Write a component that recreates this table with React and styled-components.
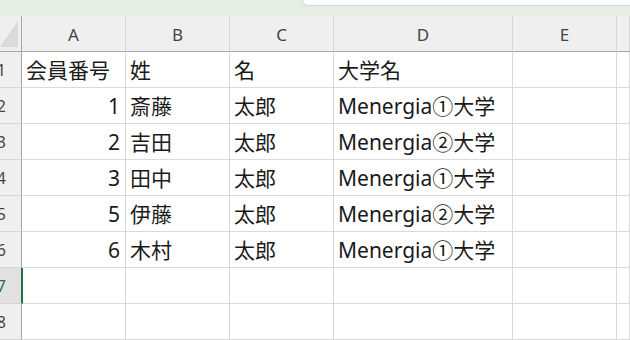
import React from "react";
import styled, { createGlobalStyle } from "styled-components";

const Global = createGlobalStyle`
  html, body { margin: 0; padding: 0; background: #ffffff; overflow: hidden; }
  body { font-family: "Noto Sans CJK JP", "Noto Sans", sans-serif; }
`;

const Page = styled.div`
  width: 630px;
  height: 340px;
  display: flex;
  flex-direction: column;
  overflow: hidden;
  background: #fff;
`;

const TopStrip = styled.div`
  height: 16px;
  flex: none;
  background: #e6ede3;
  display: flex;
  justify-content: flex-end;
  align-items: flex-start;
`;

const FormulaBox = styled.div`
  width: 327px;
  height: 5px;
  background: #ffffff;
  border: 1px solid #d2d9cf;
  border-top: none;
  border-right: none;
  border-bottom-left-radius: 7px;
`;

const Grid = styled.div`
  display: grid;
  grid-template-columns: 22px 104px 104px 104px 179px 104px 1fr;
  grid-auto-rows: 36px;
`;

const Corner = styled.div`
  background: #efefef;
  border-right: 1px solid #a8a8a8;
  border-bottom: 1px solid #a8a8a8;
  position: relative;
  svg { position: absolute; left: 0; top: 0; }
`;

const ColHead = styled.div`
  background: #efefef;
  border-right: 1px solid #d5d5d5;
  border-bottom: 1px solid #a8a8a8;
  display: flex;
  align-items: center;
  justify-content: center;
  font-family: "Noto Sans", "Liberation Sans", sans-serif;
  font-size: 17px;
  color: #444444;
  padding-top: 1px;
  box-sizing: border-box;
`;

const RowHead = styled.div`
  background: ${(p) => (p.$active ? "#e1e1e1" : "#efefef")};
  border-right: ${(p) => (p.$active ? "2px solid #1e7145" : "1px solid #a8a8a8")};
  border-bottom: 1px solid #d5d5d5;
  margin-right: ${(p) => (p.$active ? "-1px" : "0")};
  overflow: hidden;
  display: flex;
  justify-content: flex-end;
  align-items: center;
  font-family: "Noto Sans", "Liberation Sans", sans-serif;
  font-size: 16px;
  color: ${(p) => (p.$active ? "#1e7145" : "#444444")};
  position: relative;
  z-index: 1;
`;

const RowNum = styled.span`
  flex: none;
  margin-right: 15px;
`;

const Cell = styled.div`
  border-right: 1px solid #dadada;
  border-bottom: 1px solid #dadada;
  display: flex;
  align-items: flex-end;
  justify-content: ${(p) => (p.$num ? "flex-end" : "flex-start")};
  padding: 0 5px 3px 4px;
  box-sizing: border-box;
  font-family: "Noto Sans", "Noto Sans CJK JP", sans-serif;
  font-size: 21px;
  line-height: 28px;
  color: #1a1a1a;
  white-space: nowrap;
  overflow: hidden;
`;

const cols = ["A", "B", "C", "D", "E", ""];

const data = [
  ["会員番号", "姓", "名", "大学名"],
  [1, "斎藤", "太郎", "Menergia①大学"],
  [2, "吉田", "太郎", "Menergia②大学"],
  [3, "田中", "太郎", "Menergia①大学"],
  [5, "伊藤", "太郎", "Menergia②大学"],
  [6, "木村", "太郎", "Menergia①大学"],
  [null, "", "", ""],
  [null, "", "", ""],
];

export default function App() {
  return (
    <Page>
      <Global />
      <TopStrip>
        <FormulaBox />
      </TopStrip>
      <Grid>
        <Corner>
          <svg width="21" height="35" viewBox="0 0 21 35">
            <polygon points="0,31 18,5 18,31" fill="#dadada" />
          </svg>
        </Corner>
        {cols.map((c, i) => (
          <ColHead key={i}>{c}</ColHead>
        ))}
        {data.map((row, r) => (
          <React.Fragment key={r}>
            <RowHead $active={r === 6}>
              <RowNum>{r + 1}</RowNum>
            </RowHead>
            {row.map((v, i) => (
              <Cell key={i} $num={typeof v === "number"}>
                {v === null ? "" : v}
              </Cell>
            ))}
            <Cell />
            <Cell />
          </React.Fragment>
        ))}
      </Grid>
    </Page>
  );
}
